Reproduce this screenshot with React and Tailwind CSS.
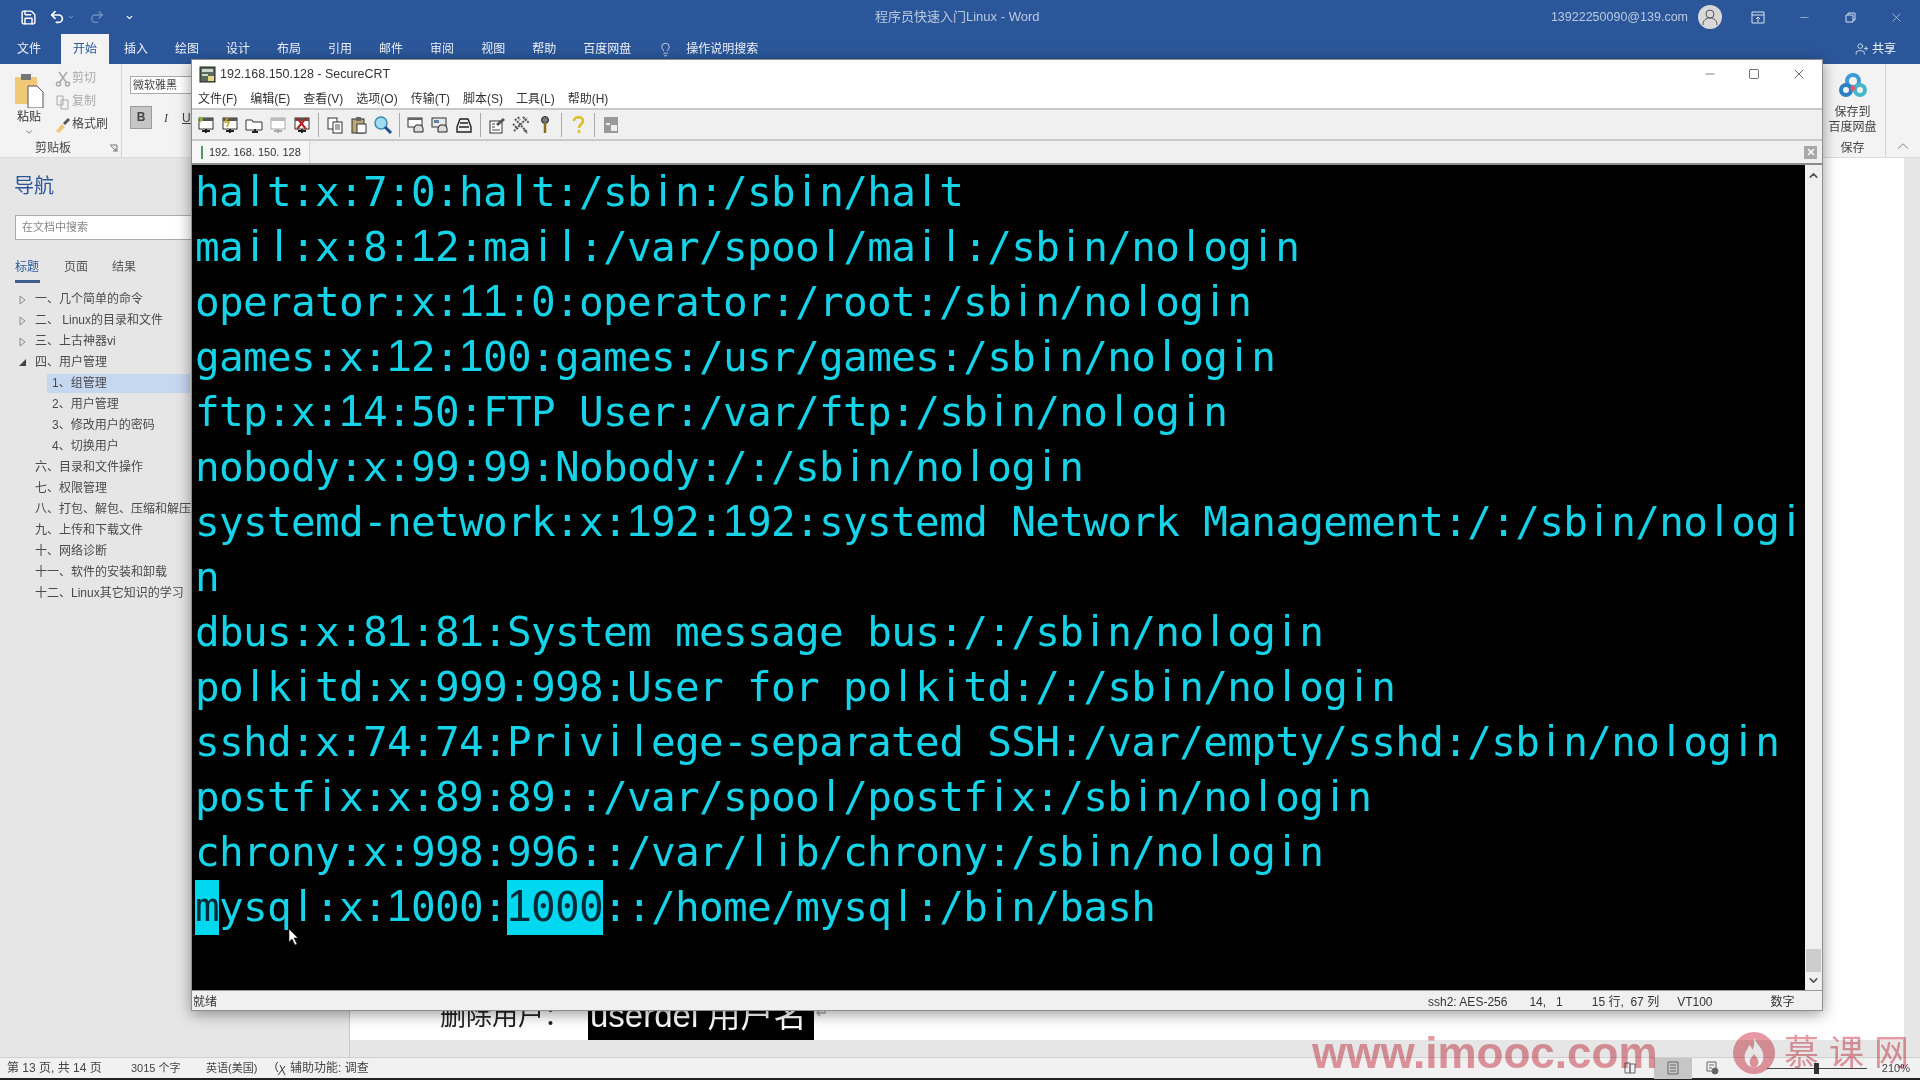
import { ChevronDown, ChevronUp, Lightbulb, Minus, Redo2, Save, Square, Undo2, UserPlus, X } from "lucide-react";

const wordTabs = ["插入", "绘图", "设计", "布局", "引用", "邮件", "审阅", "视图", "帮助"];
const crtMenu = ["文件(F)", "编辑(E)", "查看(V)", "选项(O)", "传输(T)", "脚本(S)", "工具(L)", "帮助(H)"];

const navRows = [
  { label: "一、几个简单的命令", arrow: "closed" },
  { label: "二、 Linux的目录和文件", arrow: "closed" },
  { label: "三、上古神器vi", arrow: "closed" },
  { label: "四、用户管理", arrow: "open" },
  { label: "1、组管理", sub: true, active: true },
  { label: "2、用户管理", sub: true },
  { label: "3、修改用户的密码", sub: true },
  { label: "4、切换用户", sub: true },
  { label: "六、目录和文件操作" },
  { label: "七、权限管理" },
  { label: "八、打包、解包、压缩和解压" },
  { label: "九、上传和下载文件" },
  { label: "十、网络诊断" },
  { label: "十一、软件的安装和卸载" },
  { label: "十二、Linux其它知识的学习" },
];

const lines = [
  "halt:x:7:0:halt:/sbin:/sbin/halt",
  "mail:x:8:12:mail:/var/spool/mail:/sbin/nologin",
  "operator:x:11:0:operator:/root:/sbin/nologin",
  "games:x:12:100:games:/usr/games:/sbin/nologin",
  "ftp:x:14:50:FTP User:/var/ftp:/sbin/nologin",
  "nobody:x:99:99:Nobody:/:/sbin/nologin",
  "systemd-network:x:192:192:systemd Network Management:/:/sbin/nologi",
  "n",
  "dbus:x:81:81:System message bus:/:/sbin/nologin",
  "polkitd:x:999:998:User for polkitd:/:/sbin/nologin",
  "sshd:x:74:74:Privilege-separated SSH:/var/empty/sshd:/sbin/nologin",
  "postfix:x:89:89::/var/spool/postfix:/sbin/nologin",
  "chrony:x:998:996::/var/lib/chrony:/sbin/nologin",
];

// l, i and 1 are plain stems in the reference, the mono font gives them serifs
function TermText({ text }) {
  return text.split(/([li1])/).map((part, i) =>
    /^[li1]$/.test(part) ? (
      <span key={i} className="inline-block w-[24px] text-center tracking-normal text-[44px] leading-[44px] [font-family:'Liberation_Sans',sans-serif]">
        {part}
      </span>
    ) : (
      part
    )
  );
}

function Sheet({ accent = "#222", dim }) {
  return (
    <>
      <rect x="3" y="3" width="14" height="11" fill="#fff" stroke={dim ? "#aaa" : "#333"} />
      <rect x="3" y="3" width="14" height="3" fill={dim ? "#bbb" : "#555"} />
      <path d="M6 16h8M10 14v4" stroke={accent} strokeWidth="2" />
    </>
  );
}

function ToolIcon({ name }) {
  return (
    <svg width="20" height="20" viewBox="0 0 20 20" fill="none">
      {name === "connect" && (
        <>
          <Sheet />
          <path d="M3 2l3 4M7 2L4 7" stroke="#8fbf3f" strokeWidth="1.5" />
        </>
      )}
      {name === "quick" && (
        <>
          <Sheet />
          <path d="M8 2l-3 5h4l-2 5" stroke="#c9a227" strokeWidth="1.5" />
        </>
      )}
      {name === "tab" && (
        <>
          <path d="M2 5h6l1 2h9v8H2z" fill="#fff" stroke="#333" />
          <path d="M8 17h6M11 14v4" stroke="#222" strokeWidth="2" />
        </>
      )}
      {name === "off" && <Sheet accent="#aaa" dim />}
      {name === "close" && (
        <>
          <Sheet />
          <path d="M5 3l9 11M14 3L5 14" stroke="#b3261e" strokeWidth="2" />
        </>
      )}
      {name === "copy" && (
        <>
          <rect x="3" y="3" width="9" height="11" fill="#fff" stroke="#333" />
          <rect x="8" y="7" width="9" height="11" fill="#fff" stroke="#333" />
          <path d="M10 10h5M10 12h5M10 14h5" stroke="#555" />
        </>
      )}
      {name === "paste" && (
        <>
          <rect x="3" y="4" width="12" height="14" fill="#b9a77a" stroke="#333" />
          <rect x="7" y="2" width="5" height="4" fill="#666" />
          <rect x="8" y="9" width="9" height="9" fill="#fff" stroke="#333" />
        </>
      )}
      {name === "find" && (
        <>
          <circle cx="8" cy="8" r="6" fill="#9fdcf0" stroke="#3a8fb0" strokeWidth="1.5" />
          <path d="M12 12l6 6" stroke="#1f4f8f" strokeWidth="3" />
        </>
      )}
      {name === "print1" && (
        <>
          <rect x="2" y="3" width="14" height="9" fill="#fff" stroke="#333" />
          <rect x="2" y="3" width="14" height="2" fill="#666" />
          <path d="M8 13l2-3h5l2 3v4H8z" fill="#ddd" stroke="#222" />
        </>
      )}
      {name === "print2" && (
        <>
          <rect x="2" y="3" width="14" height="9" fill="#e9e9e9" stroke="#333" />
          <rect x="4" y="5" width="5" height="3" fill="#5a7fa8" />
          <path d="M8 13l2-3h5l2 3v4H8z" fill="#ddd" stroke="#222" />
        </>
      )}
      {name === "print3" && (
        <path d="M3 12l3-8h8l3 8v5H3zM5 12h10M6 8h8" fill="#eee" stroke="#222" strokeWidth="1.4" />
      )}
      {name === "options" && (
        <>
          <rect x="3" y="6" width="12" height="12" fill="#fff" stroke="#333" />
          <path d="M5 9h3M5 12h3M5 15h8" stroke="#444" />
          <path d="M9 9l7-6 2 2-7 6z" fill="#555" />
        </>
      )}
      {name === "tools" && <path d="M3 16L16 3M4 4l12 13M2 9l5 5M12 2l6 6M7 2l2 3M13 15l3 3" stroke="#555" strokeWidth="2" strokeDasharray="2 1" />}
      {name === "key" && (
        <>
          <circle cx="10" cy="5" r="3.5" fill="#777" stroke="#222" />
          <path d="M10 8v10" stroke="#8a6d1f" strokeWidth="2.5" />
        </>
      )}
      {name === "help" && (
        <path d="M6 6c0-5 9-5 9 0 0 3-4 3-4 7M11 15v3" stroke="#d8c11f" strokeWidth="2.6" />
      )}
      {name === "lock" && (
        <>
          <rect x="3" y="2" width="14" height="16" fill="#999" />
          <rect x="10" y="10" width="6" height="6" fill="#eee" />
          <path d="M5 9h4" stroke="#eee" strokeWidth="2" />
        </>
      )}
    </svg>
  );
}

function ToolGroup({ names }) {
  return (
    <div className="flex items-center gap-1">
      {names.map((n) => (
        <ToolIcon key={n} name={n} />
      ))}
    </div>
  );
}

function Sep() {
  return <div className="h-6 w-px bg-[#a9a9a9] mx-[6px]" />;
}

function NavRow({ label, arrow, sub, active }) {
  return (
    <div className="flex h-[21px] items-center relative text-xs text-[#4a4a4a]">
      {arrow === "closed" && (
        <svg width="7" height="10" viewBox="0 0 7 10" fill="none" stroke="#8a8a8a" className="absolute left-[19px]">
          <path d="M1 1l5 4-5 4z" />
        </svg>
      )}
      {arrow === "open" && <span className="absolute left-[19px] w-0 h-0 border-b-[7px] border-b-[#444] border-l-[7px] border-l-transparent" />}
      <div className={`whitespace-nowrap h-[19px] leading-[19px] ${sub ? "ml-[47px] pl-[5px]" : "ml-[35px]"} ${active ? "w-[143px] bg-[#c6d7f0]" : ""}`}>
        {label}
      </div>
    </div>
  );
}

function Clipboard() {
  return (
    <div className="w-[122px] h-[94px] border-r border-[#d4d4d4] flex flex-col shrink-0">
      <div className="flex h-[76px]">
        <div className="w-[58px] flex flex-col items-center pt-[8px]">
          <svg width="30" height="36" viewBox="0 0 30 36">
            <rect x="1" y="5" width="22" height="27" fill="#f0c878" />
            <rect x="7" y="2" width="10" height="6" fill="#777" />
            <path d="M14 14h9l6 6v16H14z" fill="#fff" stroke="#555" />
          </svg>
          <span className="text-xs text-[#333] leading-[14px] mt-[2px]">粘贴</span>
          <ChevronDown size={10} className="text-[#666] mt-[3px]" />
        </div>
        <div className="flex flex-col pt-[3px] text-xs leading-[23px] text-[#aaa]">
          <div className="flex items-center gap-[1px] -ml-[3px]">
            <svg width="16" height="16" viewBox="0 0 16 16" fill="none" stroke="#aaa" strokeWidth="1.5"><path d="M4 1l7 10M12 1L5 11" /><circle cx="3.5" cy="13" r="2" /><circle cx="12.5" cy="13" r="2" /></svg>
            <span>剪切</span>
          </div>
          <div className="flex items-center gap-[1px] -ml-[3px]">
            <svg width="16" height="16" viewBox="0 0 16 16" fill="none" stroke="#aaa"><path d="M2 2h6v9H2zM6 6h7v9H6z" /></svg>
            <span>复制</span>
          </div>
          <div className="flex items-center gap-[1px] -ml-[3px] text-[#444]">
            <svg width="16" height="16" viewBox="0 0 16 16"><path d="M1 14l6-7 3 3-6 6z" fill="#f0c878" /><path d="M8 6l5-5 2 2-5 5z" fill="#555" /></svg>
            <span>格式刷</span>
          </div>
        </div>
      </div>
      <div className="flex items-center justify-between pl-[35px] pr-[3px] text-xs text-[#444] leading-[16px]">
        <span>剪贴板</span>
        <svg width="9" height="9" viewBox="0 0 9 9" fill="none" stroke="#777"><path d="M1 1h7v7M2 2l5 5M4 7h3V4" /></svg>
      </div>
    </div>
  );
}

function Ribbon() {
  return (
    <div className="h-[94px] bg-[#f3f3f3] flex border-b border-[#dcdcdc] shrink-0">
      <Clipboard />
      <div className="pl-[8px] pt-[12px] flex-1">
        <div className="w-[120px] h-[18px] border border-[#ababab] bg-white text-[11px] leading-[16px] pl-[2px] text-[#444]">微软雅黑</div>
        <div className="flex items-center gap-[12px] mt-[12px] text-[#444]">
          <div className="w-[22px] h-[23px] bg-[#c6c6c6] border border-[#9c9c9c] text-center text-xs font-bold leading-[21px]">B</div>
          <span className="text-xs italic [font-family:'Liberation_Serif',serif]">I</span>
          <span className="text-xs underline ml-[2px]">U</span>
        </div>
      </div>
      <div className="w-[63px] border-r border-[#d4d4d4] flex flex-col items-center pt-[8px] pr-[3px] text-xs leading-[15px] text-[#444]">
        <svg width="28" height="28" viewBox="0 0 28 28">
          <circle cx="14" cy="9" r="6" fill="none" stroke="#3a9bd8" strokeWidth="4" />
          <circle cx="7" cy="18" r="5" fill="none" stroke="#2c7fc4" strokeWidth="4" />
          <circle cx="21" cy="18" r="5" fill="none" stroke="#45b7c9" strokeWidth="4" />
          <path d="M14 13l-3 3 3 4 3-4z" fill="#e05a6b" />
        </svg>
        <span className="mt-[5px]">保存到</span>
        <span>百度网盘</span>
        <span className="mt-[6px]">保存</span>
      </div>
      <div className="w-[34px] flex items-end justify-center pb-[2px]">
        <ChevronUp size={18} strokeWidth={1} className="text-[#555]" />
      </div>
    </div>
  );
}

function SecureCrt() {
  return (
    <div className="absolute left-[191px] top-[59px] w-[1632px] h-[952px] flex flex-col bg-[#f0f0f0] border border-[#8f8f8f] shadow-[0_3px_14px_rgba(0,0,0,0.4)]">
      <div className="h-[50px] bg-white border-b-2 border-[#c9c9c9] shrink-0">
        <div className="h-[28px] flex items-center pl-[7px] text-[12.5px] text-[#333]">
          <svg width="17" height="17" viewBox="0 0 17 17">
            <rect x="1" y="1" width="15" height="15" fill="#5a6b5a" stroke="#222" />
            <rect x="3" y="3" width="11" height="3" fill="#cfd8cf" />
            <rect x="3" y="8" width="6" height="2" fill="#cfd8cf" />
            <rect x="9" y="10" width="6" height="5" fill="#e6d88a" />
          </svg>
          <span className="ml-[4px]">192.168.150.128 - SecureCRT</span>
          <div className="ml-auto flex items-center gap-[31px] pr-[15px] text-[#222]">
            <Minus size={14} strokeWidth={1} />
            <Square size={12} strokeWidth={1.3} />
            <X size={16} strokeWidth={1} />
          </div>
        </div>
        <div className="flex items-center gap-[13px] pl-[6px] pt-[1px] text-xs text-[#333] h-[20px]">
          {crtMenu.map((m) => (
            <span key={m}>{m}</span>
          ))}
        </div>
      </div>
      <div className="h-[31px] flex items-center pl-[4px] border-b-2 border-[#c9c9c9] shrink-0">
        <ToolGroup names={["connect", "quick", "tab", "off", "close"]} />
        <Sep />
        <ToolGroup names={["copy", "paste", "find"]} />
        <Sep />
        <ToolGroup names={["print1", "print2", "print3"]} />
        <Sep />
        <ToolGroup names={["options", "tools", "key"]} />
        <Sep />
        <ToolIcon name="help" />
        <Sep />
        <ToolIcon name="lock" />
      </div>
      <div className="h-[24px] flex items-center border-b-2 border-[#8d8d8d] shrink-0">
        <div className="h-full flex items-center pl-[9px] pr-[8px] border-r border-[#d8d8d8] bg-[#f6f6f6]">
          <span className="w-[2px] h-[13px] bg-[#4f9a5f]" />
          <span className="ml-[6px] text-[11px] text-[#333] whitespace-pre">192. 168. 150. 128</span>
        </div>
        <div className="ml-auto mr-[5px] w-[13px] h-[13px] bg-[#a8a8a8] flex items-center justify-center">
          <X size={10} strokeWidth={3.5} className="text-white" />
        </div>
      </div>
      <div className="flex-1 flex min-h-0">
        <div className="flex-1 bg-black pl-[3px] overflow-hidden text-[41px] leading-[55px] tracking-[-0.68px] text-[#16d3e8] [font-family:'DejaVu_Sans_Mono',monospace]">
          {lines.map((l, i) => (
            <div key={i} className="h-[55px] whitespace-pre">
              <TermText text={l} />
            </div>
          ))}
          <div className="h-[55px] whitespace-pre">
            <span className="inline-block h-[55px] align-top bg-[#00d8f0] text-[#062a35]">m</span>
            <TermText text="ysql:x:1000:" />
            <span className="inline-block h-[55px] align-top bg-[#00d8f0] text-[#062a35]"><TermText text="1000" /></span>
            <TermText text="::/home/mysql:/bin/bash" />
          </div>
          <div className="relative">
            <svg width="12" height="18" viewBox="0 0 12 18" className="absolute left-[93px] -top-[7px]">
              <path d="M1 1v13l3-3 3 6 2-1-3-6h4z" fill="#fff" stroke="#222" strokeWidth="0.6" />
            </svg>
          </div>
        </div>
        <div className="w-[17px] bg-[#f0f0f0] flex flex-col items-center shrink-0">
          <ChevronUp size={13} strokeWidth={3} className="text-[#555] mt-[4px]" />
          <div className="w-[15px] h-[23px] bg-[#cdcdcd] mt-[767px]" />
          <ChevronDown size={13} strokeWidth={3} className="text-[#555] mt-[2px]" />
        </div>
      </div>
      <div className="h-[20px] border-t border-[#9a9a9a] flex items-center text-xs text-[#333] pl-[1px] pt-[2px] shrink-0">
        <span>就绪</span>
        <span className="ml-[1211px] whitespace-nowrap">ssh2: AES-256</span>
        <span className="ml-[22px] whitespace-pre">14,   1</span>
        <span className="ml-[29px] whitespace-pre">15 行,  67 列</span>
        <span className="ml-[18px]">VT100</span>
        <span className="ml-[58px]">数字</span>
      </div>
    </div>
  );
}

function Watermark() {
  return (
    <div className="absolute left-[1312px] top-[1032px] h-[42px] flex items-center text-[#e79aa3] mix-blend-multiply pointer-events-none">
      <span className="text-[44px] leading-[42px] font-bold [font-family:'Liberation_Sans',sans-serif] w-[421px] whitespace-nowrap">www.imooc.com</span>
      <svg width="42" height="42" viewBox="0 0 58 58" className="shrink-0">
        <circle cx="29" cy="29" r="29" fill="#e79aa3" />
        <path d="M29 8c3 9 13 14 13 26 0 9-6 15-13 15s-13-6-13-15c0-7 5-10 6-16 3 2 4 4 5 7 2-5 3-10 2-17z" fill="#fff" />
        <path d="M29 30c2 4 6 6 6 11s-3 8-6 8-6-3-6-8 4-6 6-11z" fill="#e79aa3" />
      </svg>
      <span className="text-[35px] leading-[42px] ml-[9px] tracking-[10px] whitespace-nowrap">慕课网</span>
    </div>
  );
}

export default function App() {
  return (
    <div className="relative w-[1920px] h-[1080px] overflow-hidden flex flex-col bg-[#e6e6e6] [font-family:'Liberation_Sans','Noto_Sans_CJK_SC',sans-serif]">
      <div className="h-[34px] bg-[#2b579a] flex items-center text-[#b9c9e0] text-xs shrink-0 relative">
        <Save size={17} strokeWidth={2} className="ml-[20px] text-white" />
        <Undo2 size={16} strokeWidth={2.5} className="ml-[12px] text-white" />
        <ChevronDown size={8} className="ml-[2px] text-[#9fb4d4]" />
        <Redo2 size={16} className="ml-[14px] text-[#6f8fc0]" />
        <ChevronDown size={9} strokeWidth={3} className="ml-[20px] text-white" />
        <span className="ml-[741px] text-[13px] text-[#b9c9e0]">程序员快速入门Linux - Word</span>
        <span className="ml-auto text-[12.5px]">13922250090@139.com</span>
        <div className="ml-[10px] w-[24px] h-[24px] rounded-full bg-[#d8d8d8] flex items-center justify-center">
          <svg width="16" height="18" viewBox="0 0 16 18" fill="none" stroke="#555"><circle cx="8" cy="6" r="4" /><path d="M1 17c0-5 3-7 7-7s7 2 7 7" /></svg>
        </div>
        <svg width="14" height="13" viewBox="0 0 14 13" fill="none" stroke="#d7e1f0" className="ml-[29px]"><path d="M1 1h12v11H1zM1 4h12M7 11V6M5 8l2-2 2 2" /></svg>
        <Minus size={13} strokeWidth={1} className="ml-[33px] text-[#d7e1f0]" />
        <svg width="11" height="11" viewBox="0 0 11 11" fill="none" stroke="#d7e1f0" className="ml-[34px]"><path d="M1 3h7v7H1zM3 3V1h7v7H8" /></svg>
        <X size={15} strokeWidth={1} className="ml-[33px] mr-[16px] text-[#d7e1f0]" />
      </div>

      <div className="h-[30px] bg-[#2b579a] flex items-center text-xs text-[#eef2f8] shrink-0">
        <span className="ml-[17px]">文件</span>
        <span className="ml-[20px] w-[48px] h-full bg-[#f3f3f3] text-[#2b579a] flex items-center justify-center">开始</span>
        <div className="flex gap-[27px] ml-[15px]">
          {wordTabs.map((t) => (
            <span key={t}>{t}</span>
          ))}
        </div>
        <span className="ml-[27px]">百度网盘</span>
        <Lightbulb size={15} strokeWidth={1.2} className="ml-[27px]" />
        <span className="ml-[13px]">操作说明搜索</span>
        <UserPlus size={14} strokeWidth={1.3} className="ml-auto" />
        <span className="ml-[3px] mr-[24px]">共享</span>
      </div>

      <Ribbon />

      <div className="flex flex-1 min-h-0">
        <div className="w-[350px] shrink-0 bg-[#e6e6e6] pt-[14px] border-r border-[#c8c8c8]">
          <div className="ml-[14px] text-xl leading-[28px] text-[#2b579a]">导航</div>
          <div className="ml-[15px] mt-[15px] w-[200px] h-[25px] bg-white border border-[#ababab] pl-[6px] text-[11px] leading-[23px] text-[#888]">在文档中搜索</div>
          <div className="flex gap-[24px] ml-[15px] mt-[18px] text-xs leading-[18px] text-[#555]">
            <span className="text-[#2b579a] border-b-[3px] border-[#3f5f8f] pb-[4px] w-[25px]">标题</span>
            <span>页面</span>
            <span>结果</span>
          </div>
          <div className="mt-[6px]">
            {navRows.map((r) => (
              <NavRow key={r.label} {...r} />
            ))}
          </div>
        </div>
        <div className="flex-1 flex flex-col min-w-0">
          <div className="flex-1 flex">
            <div className="flex-1 bg-white flex flex-col justify-end">
              <div className="flex items-end pl-[90px] h-[42px] text-[#222]">
                <span className="inline-block w-[148px] h-[42px] text-[26px] leading-[36px] whitespace-nowrap">删除用户：</span>
                <span className="inline-block bg-black text-white pl-[2px] h-[42px] text-[33px] leading-[36px] whitespace-pre w-[226px]">userdel 用户名</span>
                <svg width="12" height="12" viewBox="0 0 12 12" fill="none" stroke="#aaa" strokeWidth="1.5" className="mb-[22px] ml-[1px]"><path d="M10 1v6H2M5 4L2 7l3 3" /></svg>
              </div>
            </div>
            <div className="w-[16px] bg-[#e6e6e6]" />
          </div>
          <div className="h-[17px] bg-[#e6e6e6]" />
        </div>
      </div>

      <div className="h-[23px] bg-[#f1f1f1] border-t border-[#d0d0d0] border-b-2 border-b-[#222] flex items-center text-[#444] shrink-0">
        <span className="ml-[7px] w-[124px] text-xs whitespace-nowrap">第 13 页, 共 14 页</span>
        <span className="w-[75px] text-[11px] whitespace-nowrap">3015 个字</span>
        <span className="w-[66px] text-[11px] whitespace-nowrap">英语(美国)</span>
        <svg width="16" height="16" viewBox="0 0 16 16" fill="none" stroke="#333"><path d="M6 2C3 4 3 9 6 12M8 5l5 10M13 6l-7 9" /></svg>
        <span className="ml-[2px] text-xs whitespace-nowrap">辅助功能: 调查</span>
        <svg width="14" height="14" viewBox="0 0 14 14" fill="none" stroke="#666" className="ml-auto"><path d="M2 2h5v10H2zM7 3h5v9H7z" /></svg>
        <div className="ml-[17px] w-[38px] h-[21px] bg-[#c6c6c6] flex items-center justify-center">
          <svg width="14" height="14" viewBox="0 0 14 14" fill="none" stroke="#666"><path d="M2 1h10v12H2zM4 4h6M4 7h6M4 10h6" /></svg>
        </div>
        <svg width="14" height="14" viewBox="0 0 14 14" fill="none" stroke="#666" className="ml-[13px]"><path d="M2 1h9v9H2zM4 4h5M4 7h3" /><circle cx="10" cy="10" r="3" fill="#666" /></svg>
        <div className="ml-[48px] relative w-[100px] h-px bg-[#444]">
          <span className="absolute left-[47px] -top-[5px] w-[5px] h-[11px] bg-[#333]" />
        </div>
        <span className="ml-[15px] mr-[10px] text-[11px]">210%</span>
      </div>

      <SecureCrt />
      <Watermark />
    </div>
  );
}
